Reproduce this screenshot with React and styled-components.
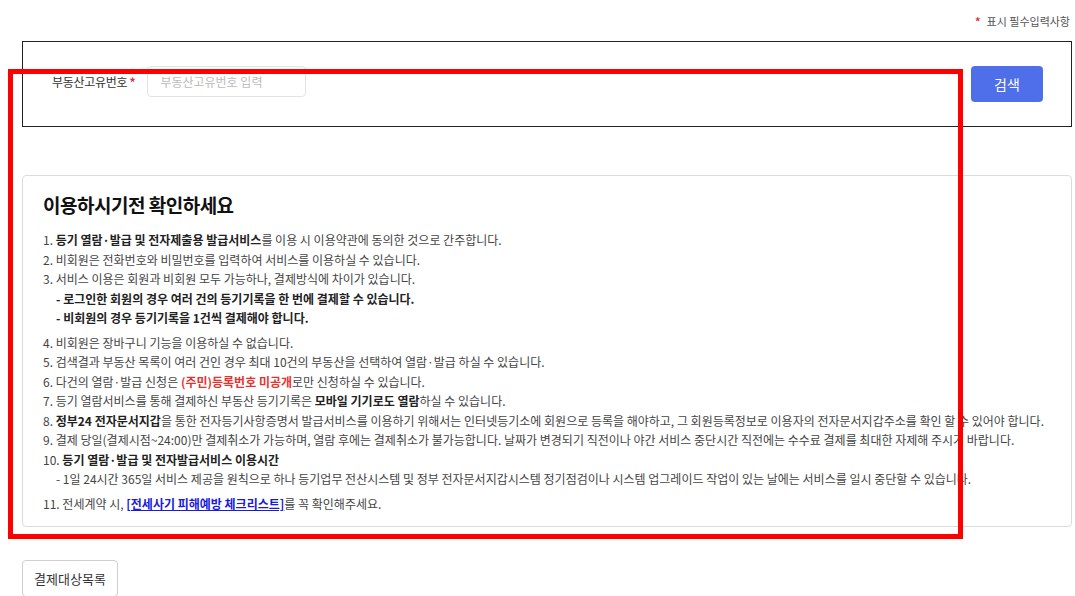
import React from 'react'
import styled, { createGlobalStyle } from 'styled-components'

const GlobalStyle = createGlobalStyle`
    body {
        margin: 0;
        background: #fff;
        font-family: "Noto Sans CJK KR", "Noto Sans", sans-serif;
        color: #333;
    }
`

const Page = styled.div`
    position: relative;
    padding: 0 3px 0 22px;
    width: 1075px;
    height: 596px;
    box-sizing: border-box;
    overflow: hidden;
`

const Notice = styled.div`
    display: flex;
    justify-content: flex-end;
    align-items: center;
    gap: 6px;
    height: 41px;
    padding-right: 2px;
    font-size: 11px;
    color: #555;
`

const Star = styled.span`
    color: #d9363e;
    font-weight: bold;
`

const SearchBox = styled.div`
    display: flex;
    align-items: center;
    justify-content: space-between;
    height: 86px;
    border: 1px solid #222;
    padding: 0 28px 5px 29px;
    box-sizing: border-box;
`

const Field = styled.div`
    display: flex;
    align-items: center;
    gap: 12px;
`

const Label = styled.label`
    font-size: 12px;
    color: #333;
    letter-spacing: -0.3px;
`

const Input = styled.input`
    width: 159px;
    height: 31px;
    box-sizing: border-box;
    border: 1px solid #e3e3e3;
    border-radius: 4px;
    padding: 0 12px;
    font-family: inherit;
    font-size: 12px;
    outline: none;
    &::placeholder {
        color: #bbb;
    }
`

const SearchBtn = styled.button`
    width: 72px;
    height: 36px;
    border: none;
    border-radius: 4px;
    background: #4e6fe9;
    color: #fff;
    font-family: inherit;
    font-size: 14px;
    margin-top: 4px;
`

const InfoCard = styled.div`
    margin-top: 48px;
    border: 1px solid #dcdcdc;
    border-radius: 4px;
    padding: 12px 20px 16px 20px;
    height: 352px;
    box-sizing: border-box;
`

const Title = styled.h2`
    margin: 0 0 8px 0;
    font-size: 19px;
    font-weight: bold;
    color: #111;
    letter-spacing: -0.5px;
    line-height: 34px;
`

const List = styled.div`
    font-size: 12px;
    line-height: 19.5px;
    color: #444;
`

const Item = styled.div`
    margin-bottom: ${p => (p.gap ? '5px' : '0')};
`

const Sub = styled.div`
    padding-left: 13px;
    font-weight: ${p => (p.bold ? 'bold' : 'normal')};
    color: ${p => (p.bold ? '#222' : '#444')};
`

const B = styled.b`
    color: #222;
`

const Red = styled.b`
    color: #e8322e;
`

const LinkText = styled.a`
    color: #1a1adb;
    font-weight: bold;
    text-decoration: underline;
`

const ListBtn = styled.button`
    margin-top: 33px;
    width: 96px;
    height: 37px;
    background: #fff;
    border: 1px solid #cfcfcf;
    border-radius: 4px;
    font-family: inherit;
    font-size: 13px;
    color: #333;
`

const Highlight = styled.div`
    position: absolute;
    left: 8px;
    top: 69px;
    width: 955px;
    height: 470px;
    border: 5px solid #ff0000;
    box-sizing: border-box;
    pointer-events: none;
`

export default function App() {
    return (
        <Page>
            <GlobalStyle />
            <Notice><Star>*</Star> 표시 필수입력사항</Notice>
            <SearchBox>
                <Field>
                    <Label>부동산고유번호 <Star>*</Star></Label>
                    <Input placeholder="부동산고유번호 입력" />
                </Field>
                <SearchBtn>검색</SearchBtn>
            </SearchBox>

            <InfoCard>
                <Title>이용하시기전 확인하세요</Title>
                <List>
                    <Item>1. <B>등기 열람·발급 및 전자제출용 발급서비스</B>를 이용 시 이용약관에 동의한 것으로 간주합니다.</Item>
                    <Item>2. 비회원은 전화번호와 비밀번호를 입력하여 서비스를 이용하실 수 있습니다.</Item>
                    <Item>3. 서비스 이용은 회원과 비회원 모두 가능하나, 결제방식에 차이가 있습니다.</Item>
                    <Sub bold>- 로그인한 회원의 경우 여러 건의 등기기록을 한 번에 결제할 수 있습니다.</Sub>
                    <Item gap><Sub bold>- 비회원의 경우 등기기록을 1건씩 결제해야 합니다.</Sub></Item>
                    <Item>4. 비회원은 장바구니 기능을 이용하실 수 없습니다.</Item>
                    <Item>5. 검색결과 부동산 목록이 여러 건인 경우 최대 10건의 부동산을 선택하여 열람·발급 하실 수 있습니다.</Item>
                    <Item>6. 다건의 열람·발급 신청은 <Red>(주민)등록번호 미공개</Red>로만 신청하실 수 있습니다.</Item>
                    <Item>7. 등기 열람서비스를 통해 결제하신 부동산 등기기록은 <B>모바일 기기로도 열람</B>하실 수 있습니다.</Item>
                    <Item>8. <B>정부24 전자문서지갑</B>을 통한 전자등기사항증명서 발급서비스를 이용하기 위해서는 인터넷등기소에 회원으로 등록을 해야하고, 그 회원등록정보로 이용자의 전자문서지갑주소를 확인 할 수 있어야 합니다.</Item>
                    <Item>9. 결제 당일(결제시점~24:00)만 결제취소가 가능하며, 열람 후에는 결제취소가 불가능합니다. 날짜가 변경되기 직전이나 야간 서비스 중단시간 직전에는 수수료 결제를 최대한 자제해 주시기 바랍니다.</Item>
                    <Item>10. <B>등기 열람·발급 및 전자발급서비스 이용시간</B></Item>
                    <Item gap><Sub>- 1일 24시간 365일 서비스 제공을 원칙으로 하나 등기업무 전산시스템 및 정부 전자문서지갑시스템 정기점검이나 시스템 업그레이드 작업이 있는 날에는 서비스를 일시 중단할 수 있습니다.</Sub></Item>
                    <Item>11. 전세계약 시, <LinkText href="#">[전세사기 피해예방 체크리스트]</LinkText>를 꼭 확인해주세요.</Item>
                </List>
            </InfoCard>

            <ListBtn>결제대상목록</ListBtn>
            <Highlight />
        </Page>
    )
}
